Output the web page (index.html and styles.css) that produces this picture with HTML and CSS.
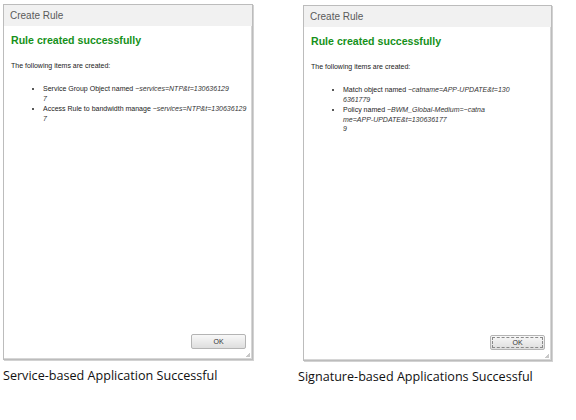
FILE: index.html
```html
<!DOCTYPE html>
<html lang="en">
<head>
  <meta charset="UTF-8">
  <meta name="viewport" content="width=device-width, initial-scale=1.0">
  <title>Create Rule</title>
  <link rel="stylesheet" href="styles.css">
</head>
<body>
  <div class="shots">
    <div class="shot">
      <div class="dialog">
        <div class="dialog-title">Create Rule</div>
        <div class="dialog-body">
          <h2>Rule created successfully</h2>
          <p>The following items are created:</p>
          <ul class="items">
            <li>Service Group Object named <em>~services=NTP&amp;t=130636129<br>7</em></li>
            <li>Access Rule to bandwidth manage <em>~services=NTP&amp;t=130636129<br>7</em></li>
          </ul>
        </div>
        <div class="dialog-foot">
          <button class="ok">OK</button>
        </div>
      </div>
      <div class="caption">Service-based Application Successful</div>
    </div>
    <div class="shot second">
      <div class="dialog">
        <div class="dialog-title">Create Rule</div>
        <div class="dialog-body">
          <h2>Rule created successfully</h2>
          <p>The following items are created:</p>
          <ul class="items">
            <li>Match object named <em>~catname=APP-UPDATE&amp;t=130<br>6361779</em></li>
            <li>Policy named <em>~BWM_Global-Medium=~catna<br>me=APP-UPDATE&amp;t=130636177<br>9</em></li>
          </ul>
        </div>
        <div class="dialog-foot">
          <button class="ok focused">OK</button>
        </div>
      </div>
      <div class="caption">Signature-based Applications Successful</div>
    </div>
  </div>
</body>
</html>
```

FILE: styles.css
```css
body {
  margin: 0;
  background: #fff;
  font-family: "Liberation Sans", Arial, sans-serif;
}
.shots {
  display: flex;
  gap: 50px;
  padding: 4px 0 0 3px;
}
.shot {
  width: 250px;
}
.shot.second {
  width: 249px;
  margin-top: 1px;
}
.dialog {
  box-sizing: border-box;
  height: 356px;
  display: flex;
  flex-direction: column;
  background: #fff;
  border: 1px solid #bcbcbc;
  box-shadow: inset -1px -1px 0 #d6d6d6, 1px 1px 0 #d2d2d2;
  position: relative;
}
.dialog::after {
  content: "";
  position: absolute;
  right: 2px;
  bottom: 2px;
  width: 4px;
  height: 4px;
  background: linear-gradient(135deg, transparent 50%, #c8c8c8 50%);
}
.dialog-title {
  height: 21px;
  line-height: 21px;
  padding-left: 6px;
  background: #f1f1f1;
  color: #5a5a5a;
  font-size: 10px;
}
.dialog-body {
  flex: 1;
  padding: 0 7px;
}
.dialog-body h2 {
  margin: 7px 0 0;
  font-size: 10.6px;
  line-height: 14px;
  color: #16911a;
}
.dialog-body p {
  margin: 14px 0 0;
  font-size: 7px;
  line-height: 10px;
  color: #222;
}
.items {
  margin: 13px 0 0;
  padding-left: 32px;
  font-size: 7px;
  line-height: 9.5px;
  color: #222;
}
.items li {
  margin-bottom: 1px;
  white-space: nowrap;
}
.items em {
  color: #333;
}
.dialog-foot {
  display: flex;
  justify-content: flex-end;
  padding: 0 6px 10px 0;
}
.ok {
  width: 55px;
  height: 15px;
  padding: 0;
  font-family: "Liberation Sans", Arial, sans-serif;
  font-size: 7px;
  color: #333;
  background: linear-gradient(#f8f8f8, #dedede);
  border: 1px solid #b4b4b4;
  border-radius: 2px;
}
.ok.focused {
  outline: 1px dashed #8a8a8a;
  outline-offset: -3px;
}
.caption {
  margin-top: 8px;
  font-family: "Open Sans", sans-serif;
  font-size: 12.6px;
  line-height: 16px;
  color: #111;
  white-space: nowrap;
}
.second .caption {
  margin-left: -5px;
}
```
